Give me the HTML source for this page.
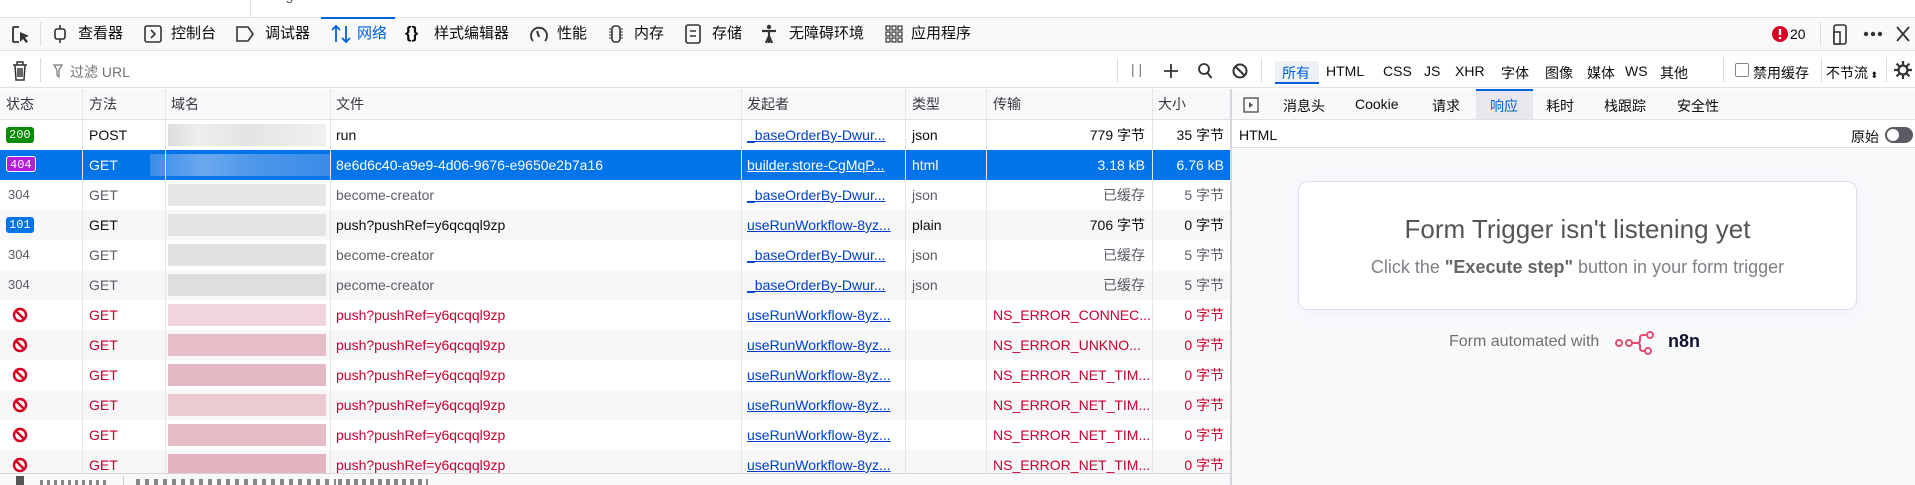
<!DOCTYPE html>
<html><head><meta charset="utf-8"><style>
*{box-sizing:border-box;margin:0;padding:0}
body{width:1915px;height:485px;overflow:hidden;background:#fff;font-family:"Liberation Sans","Noto Sans CJK SC",sans-serif;color:#0c0c0d;position:relative}
.a{position:absolute;white-space:nowrap}
.tb{top:17px;left:0;width:1915px;height:34px;background:#f9f9fb;border-top:1px solid #e0e0e2;border-bottom:1px solid #e0e0e2}
.t15{font-size:15px;line-height:34px}
.fb{top:52px;left:0;width:1915px;height:36px;background:#fff;border-bottom:1px solid #e0e0e2}
.f14{font-size:14px}
.hd{top:89px;left:0;width:1230px;height:31px;background:#f9f9fb;border-bottom:1px solid #e0e0e2;font-size:14px;line-height:31px;color:#38383d}
.row{position:absolute;left:0;width:1230px;height:30px;font-size:14px;line-height:30px}
.row span{position:absolute;white-space:nowrap}
.g{background:#f7f7f8}
.err{color:#c5002e}
.sel{background:#0074e8;color:#fff}
.lnk{color:#0040c8;text-decoration:underline}
.sel .lnk{color:#fff}
.r{text-align:right}
.vl{position:absolute;top:89px;width:1px;height:384px;background:#e6e6e8}
.badge{top:7px;height:16px;line-height:16px;font-size:12px;padding:0 3px;border-radius:3px;color:#fff;font-family:"Liberation Mono",monospace}
.blur{position:absolute;left:168px;width:158px;top:4px;height:22px}
</style></head><body>
<!-- top strip -->
<div class="a" style="top:0;left:250px;width:1px;height:17px;background:#e0e0e2"></div>
<div class="a" style="top:-13px;left:270px;font-size:14px;color:#555">Logo</div>

<!-- toolbar -->
<div class="a tb"></div>
<svg class="a" style="left:10px;top:24px" width="22" height="22" viewBox="0 0 22 22"><path d="M9 3H4a1 1 0 0 0-1 1v13a1 1 0 0 0 1 1h5" fill="none" stroke="#333" stroke-width="1.8"/><path d="M10 8l9 4-4 1.5 3 4-2 1.5-3-4-3 3z" fill="#333"/></svg>
<div class="a" style="left:40px;top:22px;width:1px;height:24px;background:#ddd"></div>
<svg class="a" style="left:51px;top:25px" width="18" height="18" viewBox="0 0 18 18"><rect x="4" y="4" width="10" height="10" rx="2" fill="none" stroke="#333" stroke-width="1.6"/><path d="M9 0v4M9 14v4" stroke="#333" stroke-width="1.6"/></svg>
<div class="a t15" style="left:78px;top:17px">查看器</div>
<svg class="a" style="left:144px;top:25px" width="18" height="18" viewBox="0 0 18 18"><rect x="1" y="1" width="16" height="16" rx="2" fill="none" stroke="#333" stroke-width="1.6"/><path d="M7 5l4 4-4 4" fill="none" stroke="#333" stroke-width="1.6"/></svg>
<div class="a t15" style="left:171px;top:17px">控制台</div>
<svg class="a" style="left:235px;top:26px" width="20" height="16" viewBox="0 0 20 16"><path d="M2 1h11l5 7-5 7H2z" fill="none" stroke="#333" stroke-width="1.6"/></svg>
<div class="a t15" style="left:265px;top:17px">调试器</div>
<div class="a" style="left:321px;top:17px;width:74px;height:2px;background:#0061e0"></div>
<svg class="a" style="left:330px;top:24px" width="22" height="20" viewBox="0 0 22 20"><path d="M6 18V2M2 6l4-4 4 4M16 2v16M12 14l4 4 4-4" fill="none" stroke="#0061e0" stroke-width="1.8"/></svg>
<div class="a t15" style="left:357px;top:17px;color:#0061e0">网络</div>
<div class="a t15" style="left:405px;top:16px;font-weight:bold;font-size:17px">{}</div>
<div class="a t15" style="left:434px;top:17px">样式编辑器</div>
<svg class="a" style="left:529px;top:25px" width="20" height="18" viewBox="0 0 20 18"><path d="M4 16A8 8 0 1 1 16 16" fill="none" stroke="#333" stroke-width="1.8"/><path d="M10 12l-2-6" stroke="#333" stroke-width="2"/></svg>
<div class="a t15" style="left:557px;top:17px">性能</div>
<svg class="a" style="left:607px;top:25px" width="18" height="18" viewBox="0 0 18 18"><rect x="5" y="1" width="8" height="16" rx="3" fill="none" stroke="#333" stroke-width="1.6"/><path d="M2 4h3M2 7h3M2 10h3M2 13h3M13 4h3M13 7h3M13 10h3M13 13h3" stroke="#333"/></svg>
<div class="a t15" style="left:634px;top:17px">内存</div>
<svg class="a" style="left:685px;top:24px" width="16" height="20" viewBox="0 0 16 20"><rect x="1" y="1" width="14" height="18" rx="2" fill="none" stroke="#333" stroke-width="1.6"/><path d="M5 7h6M5 12h6" stroke="#333" stroke-width="1.6"/></svg>
<div class="a t15" style="left:712px;top:17px">存储</div>
<svg class="a" style="left:761px;top:24px" width="16" height="20" viewBox="0 0 16 20"><circle cx="8" cy="3" r="2.2" fill="#333"/><path d="M1 7h14M8 7v12M5 19l3-7 3 7" stroke="#333" stroke-width="2.2" fill="none"/></svg>
<div class="a t15" style="left:789px;top:17px">无障碍环境</div>
<svg class="a" style="left:885px;top:25px" width="18" height="18" viewBox="0 0 18 18" fill="none" stroke="#333" stroke-width="1.2"><rect x="1" y="1" width="4" height="4"/><rect x="7" y="1" width="4" height="4"/><rect x="13" y="1" width="4" height="4"/><rect x="1" y="7" width="4" height="4"/><rect x="7" y="7" width="4" height="4"/><rect x="13" y="7" width="4" height="4"/><rect x="1" y="13" width="4" height="4"/><rect x="7" y="13" width="4" height="4"/><rect x="13" y="13" width="4" height="4"/></svg>
<div class="a t15" style="left:911px;top:17px">应用程序</div>
<svg class="a" style="left:1772px;top:26px" width="16" height="16" viewBox="0 0 16 16"><circle cx="8" cy="8" r="8" fill="#d70022"/><path d="M8 3v6" stroke="#fff" stroke-width="2.4"/><circle cx="8" cy="12" r="1.3" fill="#fff"/></svg>
<div class="a t15" style="left:1790px;top:17px;font-size:14px">20</div>
<div class="a" style="left:1820px;top:22px;width:1px;height:24px;background:#ddd"></div>
<svg class="a" style="left:1833px;top:24px" width="16" height="22" viewBox="0 0 16 22"><rect x="1" y="1" width="12" height="19" rx="2" fill="none" stroke="#333" stroke-width="1.6"/><rect x="1" y="8" width="6" height="12" fill="#fff" stroke="#333" stroke-width="1.6"/></svg>
<svg class="a" style="left:1863px;top:31px" width="20" height="6" viewBox="0 0 20 6"><circle cx="3" cy="3" r="2.2" fill="#333"/><circle cx="10" cy="3" r="2.2" fill="#333"/><circle cx="17" cy="3" r="2.2" fill="#333"/></svg>
<svg class="a" style="left:1896px;top:26px" width="14" height="16" viewBox="0 0 14 16"><path d="M1 1l12 14M13 1L1 15" stroke="#333" stroke-width="1.8"/></svg>

<!-- filter bar -->
<div class="a fb"></div>
<svg class="a" style="left:12px;top:61px" width="16" height="20" viewBox="0 0 16 20"><path d="M1 4h14M5 4V1h6v3M3 4l1 15h8l1-15M6 7v9M8 7v9M10 7v9" fill="none" stroke="#333" stroke-width="1.5"/></svg>
<div class="a" style="left:40px;top:58px;width:1px;height:24px;background:#ddd"></div>
<svg class="a" style="left:53px;top:64px" width="10" height="14" viewBox="0 0 10 14"><path d="M1 1h8L6 6v7L4 11V6z" fill="none" stroke="#777" stroke-width="1.2"/></svg>
<div class="a f14" style="left:70px;top:62px;color:#737373">过滤 URL</div>
<div class="a" style="left:1117px;top:58px;width:1px;height:24px;background:#ddd"></div>
<div class="a" style="left:1131px;top:61px;font-size:14px;color:#777">| |</div>
<svg class="a" style="left:1163px;top:63px" width="16" height="16" viewBox="0 0 16 16"><path d="M8 1v14M1 8h14" stroke="#333" stroke-width="1.8"/></svg>
<svg class="a" style="left:1197px;top:62px" width="16" height="18" viewBox="0 0 16 18"><circle cx="7" cy="7" r="5" fill="none" stroke="#333" stroke-width="1.8"/><path d="M10.5 11l4 5" stroke="#333" stroke-width="2"/></svg>
<svg class="a" style="left:1232px;top:63px" width="16" height="16" viewBox="0 0 16 16"><circle cx="8" cy="8" r="6.5" fill="none" stroke="#333" stroke-width="2"/><path d="M3.5 3.5l9 9" stroke="#333" stroke-width="2"/></svg>
<div class="a" style="left:1261px;top:58px;width:1px;height:24px;background:#ddd"></div>
<div class="a f14" style="left:1275px;top:61px;width:44px;height:22px;background:#eef1f6"></div>
<div class="a" style="left:1275px;top:82px;width:44px;height:2px;background:#0061e0"></div>
<div class="a f14" style="left:1282px;top:63px;color:#0061e0">所有</div>
<div class="a f14" style="left:1326px;top:63px">HTML</div>
<div class="a f14" style="left:1383px;top:63px">CSS</div>
<div class="a f14" style="left:1424px;top:63px">JS</div>
<div class="a f14" style="left:1455px;top:63px">XHR</div>
<div class="a f14" style="left:1501px;top:63px">字体</div>
<div class="a f14" style="left:1545px;top:63px">图像</div>
<div class="a f14" style="left:1587px;top:63px">媒体</div>
<div class="a f14" style="left:1625px;top:63px">WS</div>
<div class="a f14" style="left:1660px;top:63px">其他</div>
<div class="a" style="left:1723px;top:58px;width:1px;height:24px;background:#ddd"></div>
<div class="a" style="left:1735px;top:63px;width:14px;height:14px;border:1px solid #888;border-radius:2px;background:#fff"></div>
<div class="a f14" style="left:1753px;top:63px">禁用缓存</div>
<div class="a" style="left:1821px;top:58px;width:1px;height:24px;background:#ddd"></div>
<div class="a f14" style="left:1826px;top:63px">不节流<span style="font-size:9px"> ⬍</span></div>
<div class="a" style="left:1886px;top:58px;width:1px;height:24px;background:#ddd"></div>
<svg class="a" style="left:1893px;top:60px" width="20" height="20" viewBox="0 0 20 20"><circle cx="10" cy="10" r="4.5" fill="none" stroke="#333" stroke-width="2.2"/><path d="M10 1v4M10 15v4M1 10h4M15 10h4M3.6 3.6l2.8 2.8M13.6 13.6l2.8 2.8M3.6 16.4l2.8-2.8M13.6 6.4l2.8-2.8" stroke="#333" stroke-width="2.2"/></svg>

<!-- header -->
<div class="a hd"></div>
<div class="a f14" style="left:6px;top:89px;line-height:31px;color:#38383d">状态</div>
<div class="a f14" style="left:89px;top:89px;line-height:31px;color:#38383d">方法</div>
<div class="a f14" style="left:171px;top:89px;line-height:31px;color:#38383d">域名</div>
<div class="a f14" style="left:336px;top:89px;line-height:31px;color:#38383d">文件</div>
<div class="a f14" style="left:747px;top:89px;line-height:31px;color:#38383d">发起者</div>
<div class="a f14" style="left:912px;top:89px;line-height:31px;color:#38383d">类型</div>
<div class="a f14" style="left:993px;top:89px;line-height:31px;color:#38383d">传输</div>
<div class="a f14" style="left:1158px;top:89px;line-height:31px;color:#38383d">大小</div>

<!-- rows -->
<div class="row" style="top:120px"><span class="a badge" style="left:6px;background:#058b00">200</span><span style="left:89px">POST</span><div class="blur" style="background:linear-gradient(90deg,#ddd 0,#eee 20%,#e4e4e4 50%,#f0f0f0 100%)"></div><span style="left:336px">run</span><span class="lnk" style="left:747px">_baseOrderBy-Dwur...</span><span style="left:912px">json</span><span class="r" style="right:85px">779 字节</span><span class="r" style="right:6px">35 字节</span></div>
<div class="row sel" style="top:150px"><span class="a badge" style="left:6px;background:#b31ed8;border:1px solid #fff;top:6px">404</span><span style="left:89px">GET</span><div class="blur" style="left:150px;width:180px;background:linear-gradient(90deg,#3a8ce8,#6aa8ee 30%,#4c96ea 60%,#3a8ce8)"></div><span style="left:336px">8e6d6c40-a9e9-4d06-9676-e9650e2b7a16</span><span class="lnk" style="left:747px">builder.store-CgMqP...</span><span style="left:912px">html</span><span class="r" style="right:85px">3.18 kB</span><span class="r" style="right:6px">6.76 kB</span></div>
<div class="row" style="top:180px;color:#5b5b66"><span style="left:8px;font-size:13px">304</span><span style="left:89px">GET</span><div class="blur" style="background:#e6e6e6"></div><span style="left:336px">become-creator</span><span class="lnk" style="left:747px">_baseOrderBy-Dwur...</span><span style="left:912px">json</span><span class="r" style="right:85px">已缓存</span><span class="r" style="right:6px">5 字节</span></div>
<div class="row g" style="top:210px"><span class="a badge" style="left:6px;background:#0074e8">101</span><span style="left:89px">GET</span><div class="blur" style="background:#e4e4e4"></div><span style="left:336px">push?pushRef=y6qcqql9zp</span><span class="lnk" style="left:747px">useRunWorkflow-8yz...</span><span style="left:912px">plain</span><span class="r" style="right:85px">706 字节</span><span class="r" style="right:6px">0 字节</span></div>
<div class="row" style="top:240px;color:#5b5b66"><span style="left:8px;font-size:13px">304</span><span style="left:89px">GET</span><div class="blur" style="background:#e2e2e2"></div><span style="left:336px">become-creator</span><span class="lnk" style="left:747px">_baseOrderBy-Dwur...</span><span style="left:912px">json</span><span class="r" style="right:85px">已缓存</span><span class="r" style="right:6px">5 字节</span></div>
<div class="row g" style="top:270px;color:#5b5b66"><span style="left:8px;font-size:13px">304</span><span style="left:89px">GET</span><div class="blur" style="background:#dedede"></div><span style="left:336px">pecome-creator</span><span class="lnk" style="left:747px">_baseOrderBy-Dwur...</span><span style="left:912px">json</span><span class="r" style="right:85px">已缓存</span><span class="r" style="right:6px">5 字节</span></div>

<div class="row err" style="top:300px"><span style="left:12px;top:7px;line-height:0"><svg width="16" height="16" viewBox="0 0 16 16"><circle cx="8" cy="8" r="6" fill="none" stroke="#d70022" stroke-width="2.4"/><path d="M4 4l8 8" stroke="#d70022" stroke-width="2.4"/></svg></span><span style="left:89px">GET</span><div class="blur" style="background:#f0d6dc"></div><span style="left:336px">push?pushRef=y6qcqql9zp</span><span class="lnk" style="left:747px">useRunWorkflow-8yz...</span><span style="left:993px">NS_ERROR_CONNEC...</span><span class="r" style="right:6px">0 字节</span></div>
<div class="row err g" style="top:330px"><span style="left:12px;top:7px;line-height:0"><svg width="16" height="16" viewBox="0 0 16 16"><circle cx="8" cy="8" r="6" fill="none" stroke="#d70022" stroke-width="2.4"/><path d="M4 4l8 8" stroke="#d70022" stroke-width="2.4"/></svg></span><span style="left:89px">GET</span><div class="blur" style="background:#e7bec7"></div><span style="left:336px">push?pushRef=y6qcqql9zp</span><span class="lnk" style="left:747px">useRunWorkflow-8yz...</span><span style="left:993px">NS_ERROR_UNKNO...</span><span class="r" style="right:6px">0 字节</span></div>
<div class="row err" style="top:360px"><span style="left:12px;top:7px;line-height:0"><svg width="16" height="16" viewBox="0 0 16 16"><circle cx="8" cy="8" r="6" fill="none" stroke="#d70022" stroke-width="2.4"/><path d="M4 4l8 8" stroke="#d70022" stroke-width="2.4"/></svg></span><span style="left:89px">GET</span><div class="blur" style="background:#e4b8c2"></div><span style="left:336px">push?pushRef=y6qcqql9zp</span><span class="lnk" style="left:747px">useRunWorkflow-8yz...</span><span style="left:993px">NS_ERROR_NET_TIM...</span><span class="r" style="right:6px">0 字节</span></div>
<div class="row err g" style="top:390px"><span style="left:12px;top:7px;line-height:0"><svg width="16" height="16" viewBox="0 0 16 16"><circle cx="8" cy="8" r="6" fill="none" stroke="#d70022" stroke-width="2.4"/><path d="M4 4l8 8" stroke="#d70022" stroke-width="2.4"/></svg></span><span style="left:89px">GET</span><div class="blur" style="background:#eccad2"></div><span style="left:336px">push?pushRef=y6qcqql9zp</span><span class="lnk" style="left:747px">useRunWorkflow-8yz...</span><span style="left:993px">NS_ERROR_NET_TIM...</span><span class="r" style="right:6px">0 字节</span></div>
<div class="row err" style="top:420px"><span style="left:12px;top:7px;line-height:0"><svg width="16" height="16" viewBox="0 0 16 16"><circle cx="8" cy="8" r="6" fill="none" stroke="#d70022" stroke-width="2.4"/><path d="M4 4l8 8" stroke="#d70022" stroke-width="2.4"/></svg></span><span style="left:89px">GET</span><div class="blur" style="background:#e6bcc6"></div><span style="left:336px">push?pushRef=y6qcqql9zp</span><span class="lnk" style="left:747px">useRunWorkflow-8yz...</span><span style="left:993px">NS_ERROR_NET_TIM...</span><span class="r" style="right:6px">0 字节</span></div>
<div class="row err g" style="top:450px"><span style="left:12px;top:7px;line-height:0"><svg width="16" height="16" viewBox="0 0 16 16"><circle cx="8" cy="8" r="6" fill="none" stroke="#d70022" stroke-width="2.4"/><path d="M4 4l8 8" stroke="#d70022" stroke-width="2.4"/></svg></span><span style="left:89px">GET</span><div class="blur" style="background:#e3b4c0"></div><span style="left:336px">push?pushRef=y6qcqql9zp</span><span class="lnk" style="left:747px">useRunWorkflow-8yz...</span><span style="left:993px">NS_ERROR_NET_TIM...</span><span class="r" style="right:6px">0 字节</span></div>

<div class="vl" style="left:82px"></div><div class="vl" style="left:165px"></div><div class="vl" style="left:330px"></div><div class="vl" style="left:741px"></div><div class="vl" style="left:905px"></div><div class="vl" style="left:986px"></div><div class="vl" style="left:1152px"></div>

<!-- status bar -->
<div class="a" style="left:0;top:473px;width:1230px;height:12px;background:#f9f9fb;border-top:1px solid #d7d7db"></div>
<div class="a" style="left:16px;top:476px;width:8px;height:9px;background:#555"></div>
<div class="a" style="left:40px;top:480px;width:70px;height:5px;background:repeating-linear-gradient(90deg,#888 0 3px,transparent 3px 7px)"></div>
<div class="a" style="left:123px;top:476px;width:1px;height:9px;background:#ccc"></div>
<div class="a" style="left:136px;top:479px;width:200px;height:6px;background:repeating-linear-gradient(90deg,#888 0 4px,transparent 4px 9px)"></div>
<div class="a" style="left:338px;top:479px;width:90px;height:6px;background:repeating-linear-gradient(90deg,#888 0 4px,transparent 4px 8px)"></div>

<!-- right panel -->
<div class="a" style="left:1230px;top:89px;width:2px;height:396px;background:#d7d7db"></div>
<div class="a" style="left:1232px;top:89px;width:683px;height:31px;background:#f9f9fb;border-bottom:1px solid #e0e0e2"></div>
<svg class="a" style="left:1243px;top:97px" width="16" height="16" viewBox="0 0 16 16"><rect x="1" y="1" width="14" height="14" fill="none" stroke="#555" stroke-width="1.4"/><path d="M6 5l4 3-4 3z" fill="#555"/></svg>
<div class="a f14" style="left:1283px;top:96px">消息头</div>
<div class="a f14" style="left:1355px;top:96px">Cookie</div>
<div class="a f14" style="left:1432px;top:96px">请求</div>
<div class="a" style="left:1476px;top:89px;width:57px;height:30px;background:#e8e8ec;border-top:2px solid #0061e0"></div>
<div class="a f14" style="left:1490px;top:96px;color:#0061e0">响应</div>
<div class="a f14" style="left:1546px;top:96px">耗时</div>
<div class="a f14" style="left:1604px;top:96px">栈跟踪</div>
<div class="a f14" style="left:1677px;top:96px">安全性</div>
<div class="a" style="left:1232px;top:120px;width:683px;height:28px;background:#fff;border-bottom:1px solid #e0e0e2"></div>
<div class="a f14" style="left:1239px;top:127px">HTML</div>
<div class="a f14" style="left:1851px;top:127px">原始</div>
<div class="a" style="left:1885px;top:127px;width:28px;height:16px;border-radius:8px;background:#5b5b66"></div>
<div class="a" style="left:1887px;top:129px;width:12px;height:12px;border-radius:6px;background:#fff"></div>
<div class="a" style="left:1232px;top:149px;width:683px;height:336px;background:#f9fafc"></div>
<div class="a" style="left:1298px;top:181px;width:559px;height:129px;background:#fff;border:1px solid #dbdfe7;border-radius:10px;box-shadow:0 4px 16px rgba(99,77,255,0.06)"></div>
<div class="a" style="left:1298px;top:214px;width:559px;text-align:center;font-size:26px;color:#555">Form Trigger isn't listening yet</div>
<div class="a" style="left:1298px;top:257px;width:559px;text-align:center;font-size:18px;color:#7e8186">Click the <b style="color:#666">"Execute step"</b> button in your form trigger</div>
<div class="a" style="left:1449px;top:333px;font-size:16px;color:#707070">Form automated with</div>
<svg class="a" style="left:1615px;top:331px" width="46" height="24" viewBox="0 0 46 24"><g fill="none" stroke="#ea4b71" stroke-width="2"><circle cx="4" cy="12" r="3"/><circle cx="14" cy="12" r="3"/><path d="M17 12h5c2 0 3-1 3-3V7c0-2 1-3 3-3h3M22 12c2 0 3 1 3 3v2c0 2 1 3 3 3h2"/><circle cx="35" cy="4" r="3"/><circle cx="33" cy="20" r="3"/></g></svg>
<div class="a" style="left:1668px;top:331px;font-size:18px;font-weight:bold;color:#101330">n8n</div>
</body></html>
